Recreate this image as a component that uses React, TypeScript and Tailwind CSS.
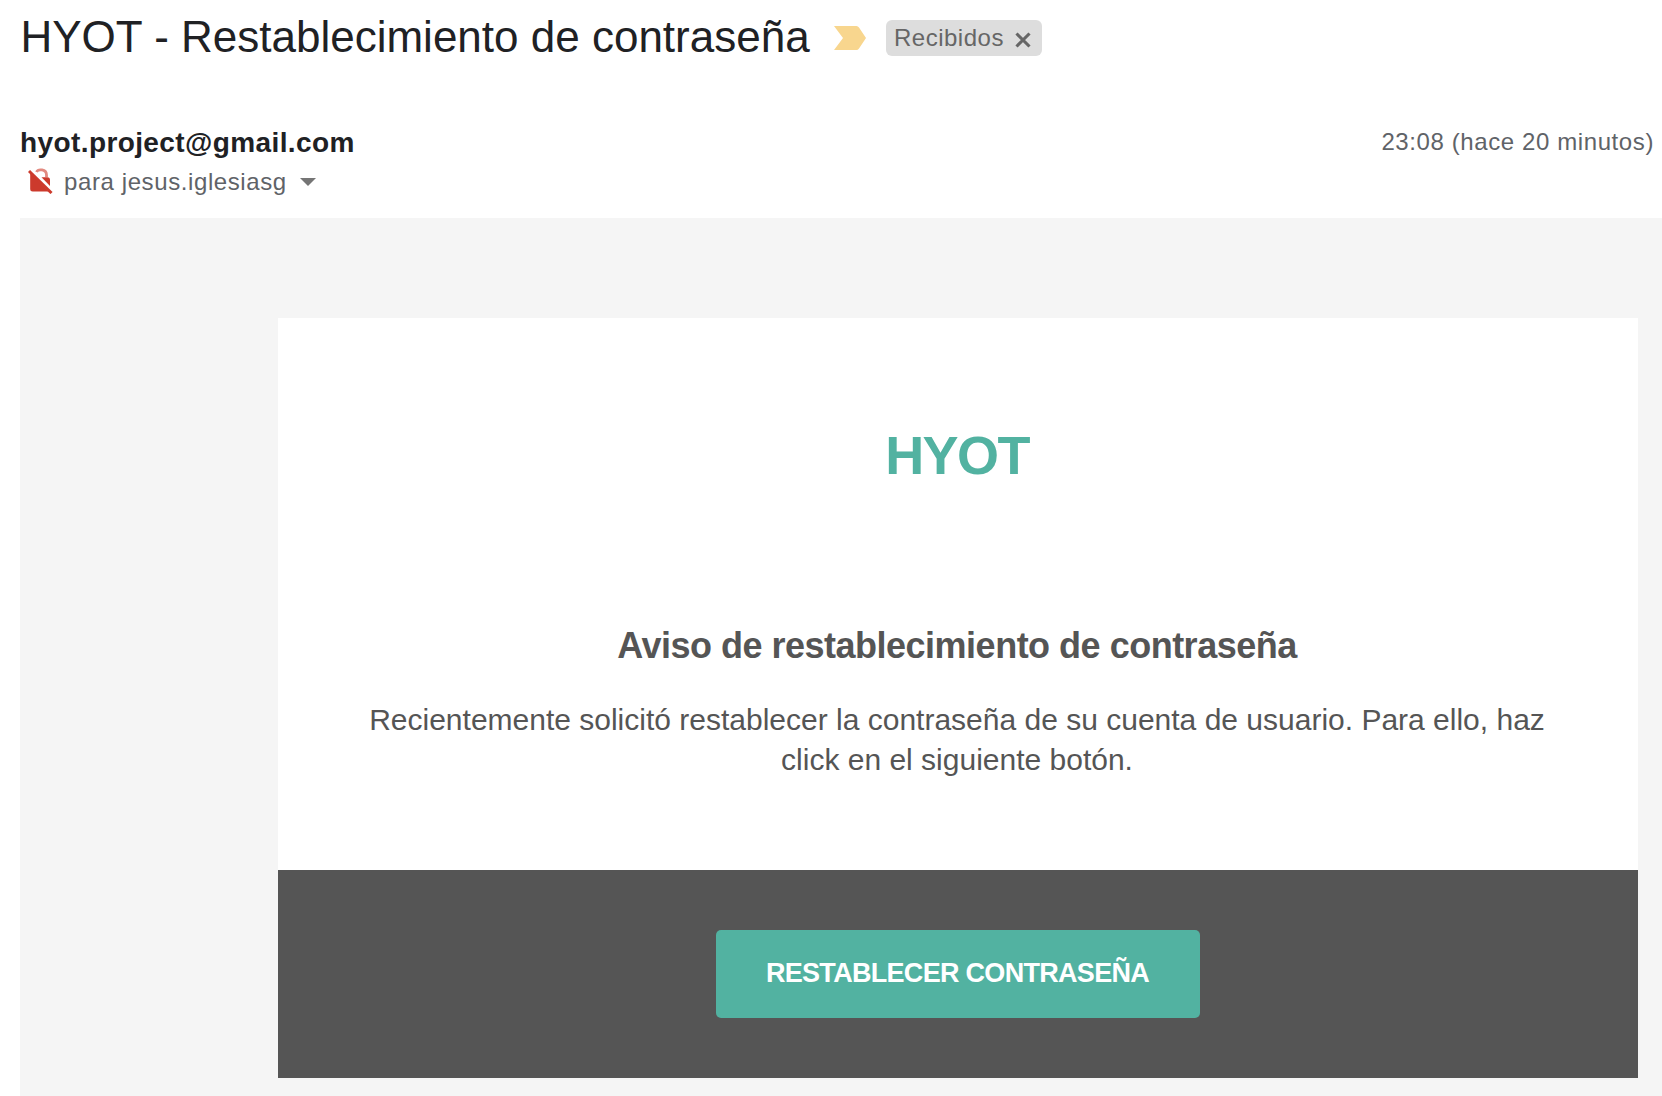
function ImportanceMarker() {
  return (
    <svg className="ml-[26px] h-6 w-8 shrink-0" viewBox="0 0 32 24" fill="#f8d68e">
      <path d="M0 0H22.5Q24 0 25 1.5L32 12L25 22.5Q24 24 22.5 24H0L9 12Z" />
    </svg>
  );
}

function CloseIcon() {
  return (
    <svg className="ml-[11.5px] mt-1 h-4 w-4 shrink-0" viewBox="0 0 16 16" stroke="#666" strokeWidth="3.1">
      <path d="M1.5 1.5L14.5 14.5M14.5 1.5L1.5 14.5" />
    </svg>
  );
}

function NoEncryptionIcon() {
  return (
    <svg className="mb-[3px] ml-2 h-[26px] w-[25px] shrink-0" viewBox="0 0 25 26">
      <path d="M8.5 4C10 0.8 18.5 0.8 18.5 7V9" fill="none" stroke="#e28a80" strokeWidth="2.8" />
      <path d="M2.2 5L20.5 23.5H4.7Q2.2 23.5 2.2 21Z" fill="#cc3a2c" />
      <path d="M13.5 9.3H19.5Q22 9.3 22 11.8V18Z" fill="#cc3a2c" />
      <path d="M1 3L23.5 25" stroke="#cc3a2c" strokeWidth="3" />
    </svg>
  );
}

export default function App() {
  return (
    <div className="flex h-[1096px] w-[1662px] flex-col overflow-hidden bg-white pl-5 font-['Liberation_Sans',Arial,sans-serif]">
      <header className="flex h-[122px] items-start pt-[17px]">
        <h1 className="w-[788px] shrink-0 whitespace-nowrap pl-[0.5px] text-[44px] leading-10 text-[#202124]">
          HYOT - Restablecimiento de contraseña
        </h1>
        <div className="mt-[3px] flex h-9 items-center">
          <ImportanceMarker />
          <div className="ml-5 flex h-9 w-[156px] items-center rounded-md bg-[#ddd] pl-2 text-2xl leading-9 text-[#666]">
            <span className="whitespace-nowrap tracking-[0.5px]">Recibidos</span>
            <CloseIcon />
          </div>
        </div>
      </header>

      <section className="flex h-24 shrink-0 items-start justify-between pr-2">
        <div>
          <p className="h-10 pt-px text-[28px] font-bold leading-10 tracking-[0.4px] text-[#202124]">hyot.project@gmail.com</p>
          <div className="flex h-10 items-center text-2xl leading-10 text-[#5f6368]">
            <NoEncryptionIcon />
            <span className="ml-[11px] tracking-[0.6px]">para jesus.iglesiasg</span>
            <svg className="ml-[13px] h-2 w-4" viewBox="0 0 16 8" fill="#757575">
              <path d="M0 0H16L8 8Z" />
            </svg>
          </div>
        </div>
        <p className="whitespace-nowrap text-2xl leading-10 tracking-[0.6px] text-[#5f6368]">23:08 (hace 20 minutos)</p>
      </section>

      <main className="flex-1 bg-[#f5f5f5] pl-[258px] pr-6 pt-[100px]">
        <article className="text-center text-[#555]">
          <div className="h-[552px] bg-white pr-0.5 pt-[107px]">
            <p className="text-[54px] font-bold leading-[60px] tracking-[-1.6px] text-[#52b2a1]">HYOT</p>
            <h2 className="mt-[141px] text-4xl font-bold leading-10 tracking-[-0.5px]">
              Aviso de restablecimiento de contraseña
            </h2>
            <p className="mt-[34px] whitespace-nowrap text-[30px] leading-10">
              Recientemente solicitó restablecer la contraseña de su cuenta de usuario. Para ello, haz
              <br />
              click en el siguiente botón.
            </p>
          </div>
          <div className="flex h-52 items-center justify-center bg-[#555]">
            <button className="h-[88px] w-[484px] whitespace-nowrap rounded-[5px] bg-[#52b2a1] pb-0.5 pr-px text-[27px] font-bold leading-10 tracking-[-0.7px] text-white">
              RESTABLECER CONTRASEÑA
            </button>
          </div>
        </article>
      </main>
    </div>
  );
}
